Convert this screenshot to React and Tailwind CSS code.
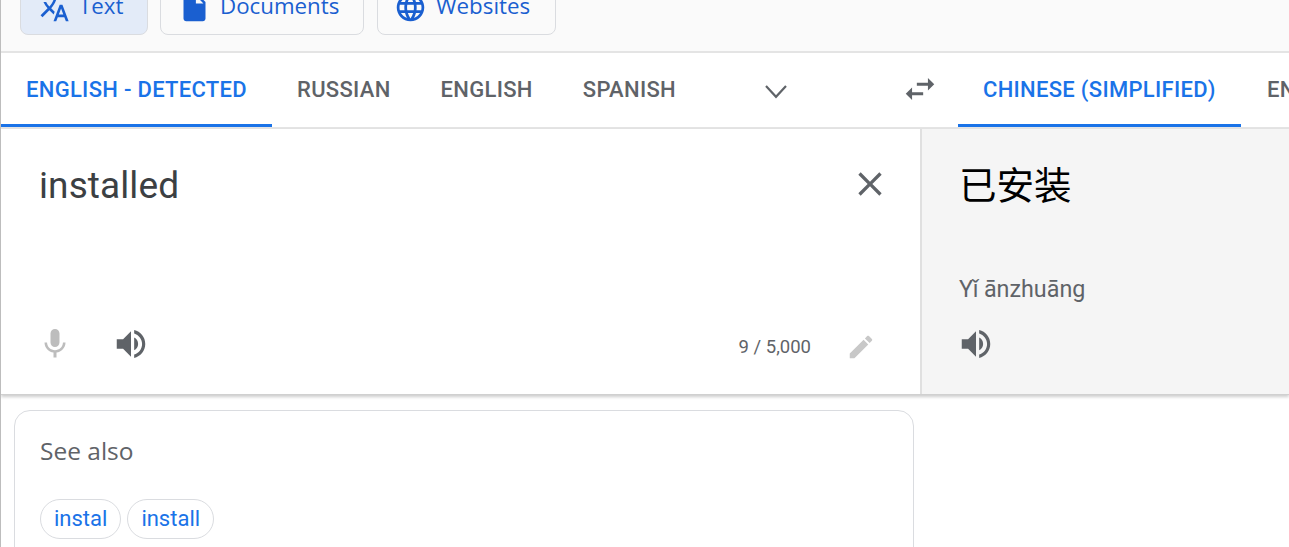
const paths = {
  translate: 'M12.87 15.07l-2.54-2.51.03-.03c1.74-1.94 2.98-4.17 3.71-6.53H17V4h-7V2H8v2H1v1.99h11.17C11.5 7.92 10.44 9.75 9 11.35 8.07 10.32 7.3 9.19 6.69 8h-2c.73 1.63 1.73 3.17 2.98 4.56l-5.09 5.02L4 19l5-5 3.11 3.11.76-2.04zM18.5 10h-2L12 22h2l1.12-3h4.75L21 22h2l-4.5-12zm-2.62 7l1.62-4.33L19.12 17h-3.24z',
  doc: 'M6 2c-1.1 0-1.99.9-1.99 2L4 20c0 1.1.89 2 1.99 2H18c1.1 0 2-.9 2-2V8l-6-6H6zm7 7V3.5L18.5 9H13z',
  globe: 'M11.99 2C6.47 2 2 6.48 2 12s4.47 10 9.99 10C17.52 22 22 17.52 22 12S17.52 2 11.99 2zm6.93 6h-2.95c-.32-1.25-.78-2.45-1.38-3.56 1.84.63 3.37 1.91 4.33 3.56zM12 4.04c.83 1.2 1.48 2.53 1.91 3.96h-3.82c.43-1.43 1.08-2.76 1.91-3.96zM4.26 14C4.1 13.36 4 12.69 4 12s.1-1.36.26-2h3.38c-.08.66-.14 1.32-.14 2 0 .68.06 1.34.14 2H4.26zm.82 2h2.95c.32 1.25.78 2.45 1.38 3.56-1.84-.63-3.37-1.9-4.33-3.56zm2.95-8H5.08c.96-1.66 2.49-2.93 4.33-3.56C8.81 5.55 8.35 6.75 8.03 8zM12 19.96c-.83-1.2-1.48-2.53-1.91-3.96h3.82c-.43 1.43-1.08 2.76-1.91 3.96zM14.34 14H9.66c-.09-.66-.16-1.32-.16-2 0-.68.07-1.35.16-2h4.68c.09.65.16 1.32.16 2 0 .68-.07 1.34-.16 2zm.25 5.56c.6-1.11 1.06-2.31 1.38-3.56h2.95c-.96 1.65-2.49 2.93-4.33 3.56zM16.36 14c.08-.66.14-1.32.14-2 0-.68-.06-1.34-.14-2h3.38c.16.64.26 1.31.26 2s-.1 1.36-.26 2h-3.38z',
  mic: 'M12 14c1.66 0 2.99-1.34 2.99-3L15 5c0-1.66-1.34-3-3-3S9 3.34 9 5v6c0 1.66 1.34 3 3 3zm5.3-3c0 3-2.54 5.1-5.3 5.1S6.7 14 6.7 11H5c0 3.41 2.72 6.23 6 6.72V21h2v-3.28c3.28-.48 6-3.3 6-6.72h-1.7z',
  volume: 'M3 9v6h4l5 5V4L7 9H3zm13.5 3c0-1.77-1.02-3.29-2.5-4.03v8.05c1.48-.73 2.5-2.25 2.5-4.02zM14 3.23v2.06c2.89.86 5 3.54 5 6.71s-2.11 5.85-5 6.71v2.06c4.01-.91 7-4.49 7-8.77s-2.99-7.86-7-8.77z',
  edit: 'M3 17.25V21h3.75L17.81 9.94l-3.75-3.75L3 17.25zM20.71 7.04c.39-.39.39-1.02 0-1.41l-2.34-2.34c-.39-.39-1.02-.39-1.41 0l-1.83 1.83 3.75 3.75 1.83-1.83z',
  close: 'M19 6.41L17.59 5 12 10.59 6.41 5 5 6.41 10.59 12 5 17.59 6.41 19 12 13.41 17.59 19 19 17.59 13.41 12z',
  swap: 'M6.99 11L3 15l3.99 4v-3H14v-2H6.99v-3zM21 9l-3.99-4v3H10v2h7.01v3L21 9z',
}

function Icon({ name, size, className }) {
  return (
    <svg viewBox="0 0 24 24" width={size} height={size} fill="currentColor" className={`shrink-0 ${className}`}>
      <path d={paths[name]} />
    </svg>
  )
}

function ModeButton({ icon, label, active, className }) {
  return (
    <div className={`flex items-center h-[56px] rounded-b-lg border border-[#dadce0] text-[#1a5fd0] text-[22.3px] font-['Open_Sans',sans-serif] ${active ? 'bg-[#e3ebf8]' : 'bg-[#fafafa]'} ${className}`}>
      <Icon name={icon} size={33} />
      <span className="-mt-[2px]">{label}</span>
    </div>
  )
}

function Tab({ label, active, className }) {
  return (
    <div className={`flex items-center h-full text-[22px] font-medium tracking-[0.3px] border-b-[3px] pt-[1px] whitespace-nowrap shrink-0 ${active ? 'text-[#1a73e8] border-[#1a73e8]' : 'text-[#5f6368] border-transparent'} ${className}`}>
      {label}
    </div>
  )
}

export default function App() {
  return (
    <div className="w-[1289px] h-[547px] overflow-hidden bg-white border-l border-[#bdbdbd] font-['Roboto',sans-serif]">
      <div className="h-[53px] bg-[#fafafa] border-b-2 border-[#e4e4e4] overflow-hidden">
        <div className="flex pl-[19px] -mt-[21px]">
          <ModeButton icon="translate" label="Text" active className="w-[128px] pl-[16px] gap-[9px]" />
          <ModeButton icon="doc" label="Documents" className="w-[204px] ml-3 pl-[17px] gap-[9px]" />
          <ModeButton icon="globe" label="Websites" className="w-[179px] ml-[13px] pl-[16px] gap-[9px]" />
        </div>
      </div>

      <div className="flex items-center h-[76px] border-b-2 border-[#e4e4e4] overflow-hidden">
        <div className="flex items-center h-full w-[957px] shrink-0">
          <Tab label="ENGLISH - DETECTED" active className="w-[271px] pl-[25px]" />
          <div className="flex items-center h-full gap-[50px] pl-[25px]">
            <Tab label="RUSSIAN" />
            <Tab label="ENGLISH" />
            <Tab label="SPANISH" />
          </div>
          <svg viewBox="0 0 24 24" width="40" height="40" fill="none" stroke="currentColor" strokeWidth="1.3" className="shrink-0 text-[#5f6368] ml-[80px] mt-[1px]">
            <polyline points="6,9 12,15.5 18,9" />
          </svg>
          <Icon name="swap" size={38} className="text-[#5f6368] ml-[105px] -mt-[2px]" />
        </div>
        <Tab label="CHINESE (SIMPLIFIED)" active className="w-[283px] pl-[25px]" />
        <Tab label="ENGLISH" className="pl-[26px]" />
      </div>

      <div className="flex h-[266px] border-b border-[#d0d0d0] shadow-[0_2px_3px_rgba(0,0,0,0.2)]">
        <div className="flex flex-col justify-between w-[921px] shrink-0 border-r-2 border-[#e0e0e0] pb-[31px]">
          <div className="flex items-start justify-between pl-[38px] pr-[30px] pt-[32px]">
            <div className="text-[37px] leading-[50px] text-[#3c4043] tracking-[0.1px]">installed</div>
            <Icon name="close" size={40} className="text-[#5f6368] mt-[3px]" />
          </div>
          <div className="flex items-center pl-[36px] pr-[44px]">
            <Icon name="mic" size={36} className="text-[#bdbdbd]" />
            <Icon name="volume" size={38} className="text-[#5f6368] ml-[39px]" />
            <div className="ml-auto text-[18.5px] text-[#5f6368] mt-[8px]">9 / 5,000</div>
            <Icon name="edit" size={30} className="text-[#c8c8c8] ml-[35px] mt-[6px]" />
          </div>
        </div>
        <div className="flex flex-col flex-1 bg-[#f5f5f5] pl-[37px] pt-[29px] pb-[31px]">
          <div className="text-[37.5px] leading-[50px] text-black font-['Noto_Sans_CJK_SC',sans-serif]">已安装</div>
          <div className="text-[23.3px] text-[#5f6368] mt-[66px] leading-[30px]">Yǐ ānzhuāng</div>
          <Icon name="volume" size={38} className="text-[#5f6368] mt-auto -ml-[2px]" />
        </div>
      </div>

      <div className="w-[900px] ml-[13px] mt-[15px] h-[200px] rounded-t-2xl border border-[#dadce0] pl-[25px] pt-[22px]">
        <div className="text-[24.5px] leading-[36px] text-[#5f6368] font-['Open_Sans',sans-serif]">See also</div>
        <div className="flex gap-[6px] mt-[30px]">
          <div className="flex items-center h-[40px] px-[13px] pb-[2px] rounded-full border border-[#dadce0] text-[22px] text-[#1a73e8]">instal</div>
          <div className="flex items-center h-[40px] px-[13px] pb-[2px] rounded-full border border-[#dadce0] text-[22px] text-[#1a73e8]">install</div>
        </div>
      </div>
    </div>
  )
}
